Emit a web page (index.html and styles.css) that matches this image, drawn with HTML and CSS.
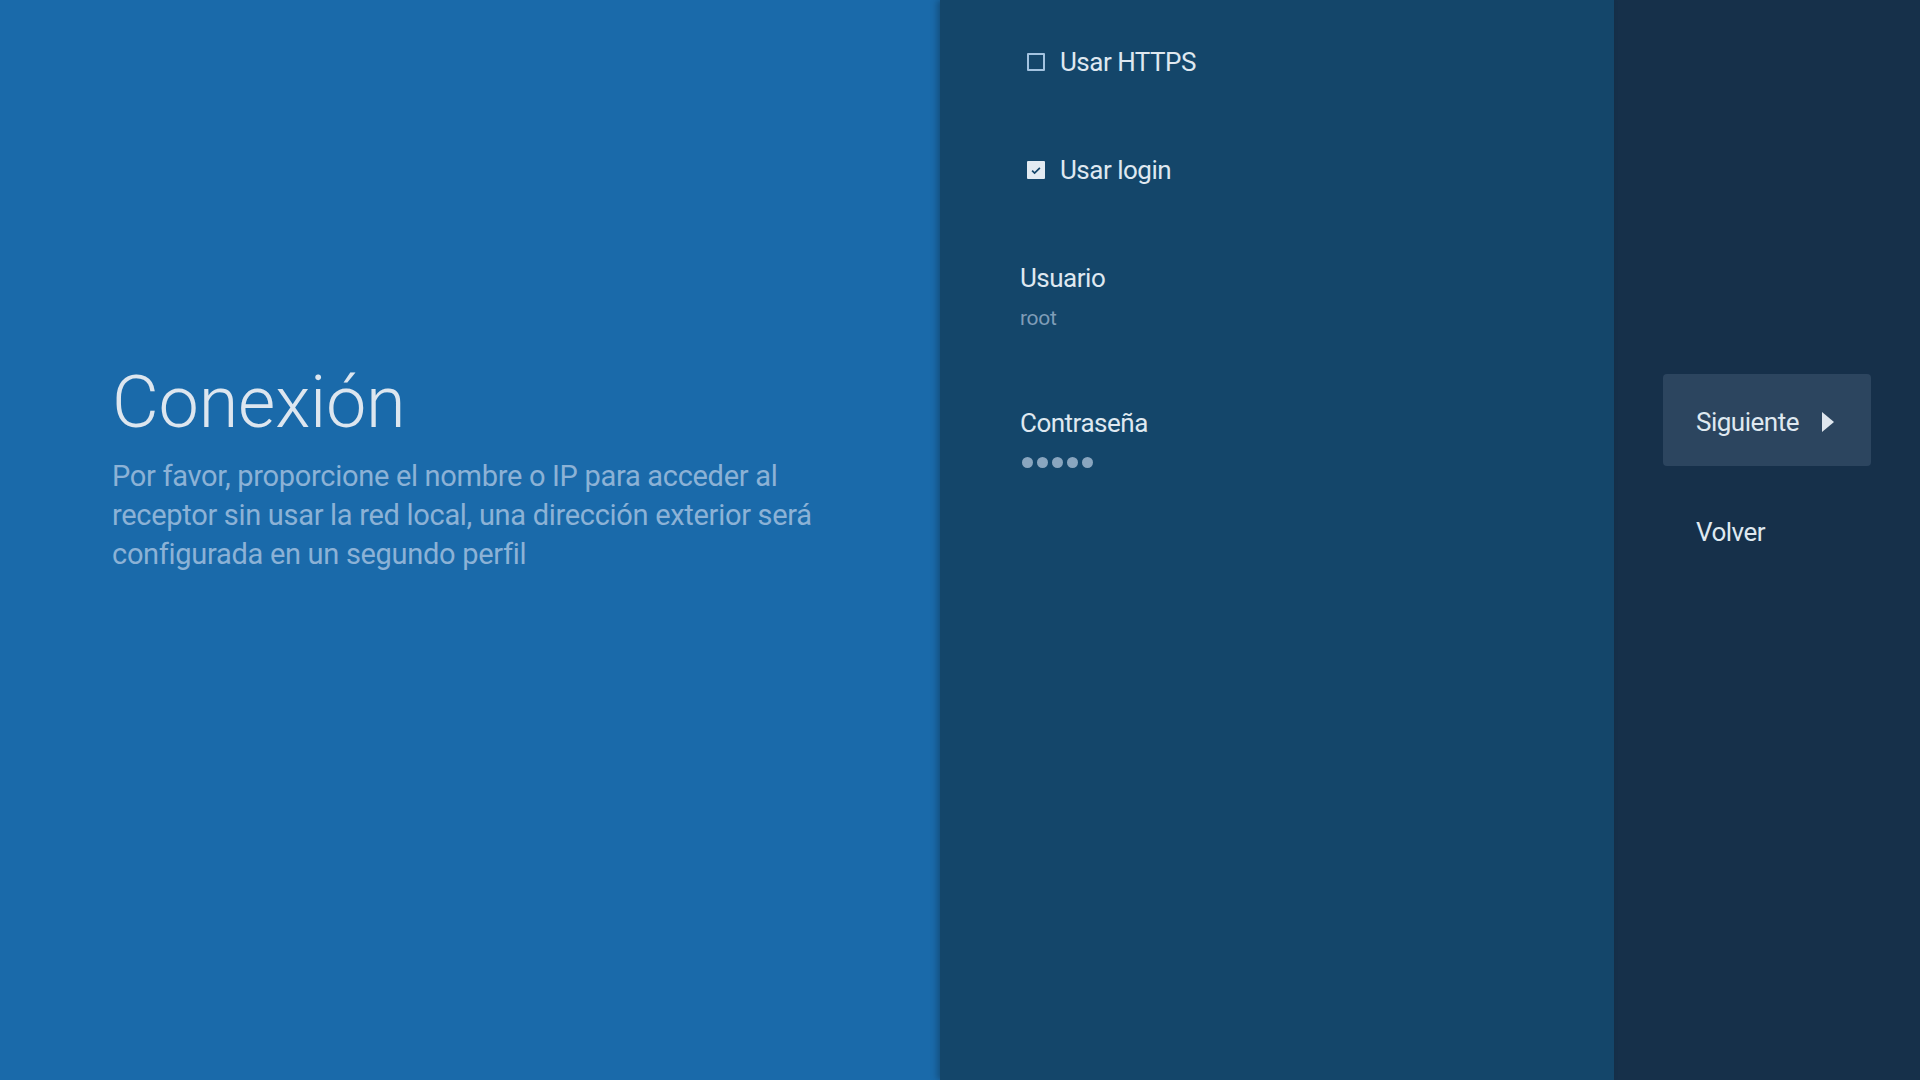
FILE: index.html
```html
<!DOCTYPE html>
<html lang="es">
<head>
    <meta charset="UTF-8">
    <meta name="viewport" content="width=device-width, initial-scale=1.0">
    <title>Conexión</title>
    <link rel="stylesheet" href="styles.css">
</head>
<body>
    <div class="screen">
        <div class="guidance">
            <h1>Conexión</h1>
            <p class="description">Por favor, proporcione el nombre o IP para acceder al receptor sin usar la red local, una dirección exterior será configurada en un segundo perfil</p>
        </div>

        <div class="actions">
            <div class="action">
                <span class="checkbox"></span>
                <span class="title">Usar HTTPS</span>
            </div>
            <div class="action">
                <span class="checkbox checked">
                    <svg viewBox="0 0 18 18" width="18" height="18"><path d="M4 9.2l3.2 3.2L14 5.6" fill="none" stroke="#14466a" stroke-width="2.2"/></svg>
                </span>
                <span class="title">Usar login</span>
            </div>
            <div class="action stacked">
                <span class="title">Usuario</span>
                <span class="value">root</span>
            </div>
            <div class="action stacked">
                <span class="title">Contraseña</span>
                <span class="dots"><i></i><i></i><i></i><i></i><i></i></span>
            </div>
        </div>

        <div class="buttons">
            <div class="button focused">
                <span class="title">Siguiente</span>
                <svg class="arrow" viewBox="0 0 12 20" width="12" height="20"><path d="M0 0L12 10L0 20Z" fill="#dfe6ee"/></svg>
            </div>
            <div class="button">
                <span class="title">Volver</span>
            </div>
        </div>
    </div>
</body>
</html>
```

FILE: styles.css
```css
* {
    margin: 0;
    padding: 0;
    box-sizing: border-box;
}

body {
    font-family: Roboto, 'Noto Sans', sans-serif;
    background: #16304a;
    overflow: hidden;
}

.screen {
    display: flex;
    width: 1920px;
    height: 1080px;
}

/* left column */
.guidance {
    width: 940px;
    background: #1a6aaa;
    padding: 361px 80px 0 112px;
}

.guidance h1 {
    font-weight: 300;
    font-size: 72px;
    line-height: 84px;
    color: #dde6ef;
    letter-spacing: -0.2px;
}

.guidance .description {
    margin-top: 12px;
    font-size: 29px;
    line-height: 39px;
    color: #8cb2d6;
    letter-spacing: -0.3px;
    max-width: 720px;
}

/* middle column */
.actions {
    width: 674px;
    background: #14466a;
    box-shadow: -3px 0 6px rgba(0, 0, 0, 0.25);
    padding: 8px 0 0 80px;
    position: relative;
}

.action {
    display: flex;
    align-items: center;
    height: 108px;
}

.action.stacked {
    flex-direction: column;
    align-items: flex-start;
    justify-content: flex-start;
    height: 145px;
    padding-top: 34px;
}

.title {
    font-size: 26px;
    line-height: 40px;
    color: #dfe8f0;
    letter-spacing: -0.5px;
}

.checkbox {
    width: 18px;
    height: 18px;
    margin: 0 15px 0 7px;
    border: 2px solid #a3c3e0;
    border-radius: 1px;
    display: flex;
    align-items: center;
    justify-content: center;
}

.checkbox.checked {
    background: #e3ebf2;
    border-color: #e3ebf2;
}

.checkbox svg {
    width: 15px;
    height: 15px;
}

.value {
    margin-top: 5px;
    font-size: 21px;
    line-height: 30px;
    color: #7f9db8;
    letter-spacing: -0.3px;
}

.dots {
    display: flex;
    gap: 4px;
    margin-top: 14px;
    padding-left: 2px;
}

.dots i {
    width: 11px;
    height: 11px;
    border-radius: 50%;
    background: #8aa6bf;
}

/* right column */
.buttons {
    flex: 1;
    background: #16304a;
    padding: 374px 49px 0 49px;
    display: flex;
    flex-direction: column;
    gap: 18px;
}

.button {
    height: 92px;
    padding: 3px 33px 0;
    display: flex;
    align-items: center;
    border-radius: 4px;
}

.button.focused {
    background: #2c455f;
}

.button .arrow {
    margin-left: 23px;
}
```
